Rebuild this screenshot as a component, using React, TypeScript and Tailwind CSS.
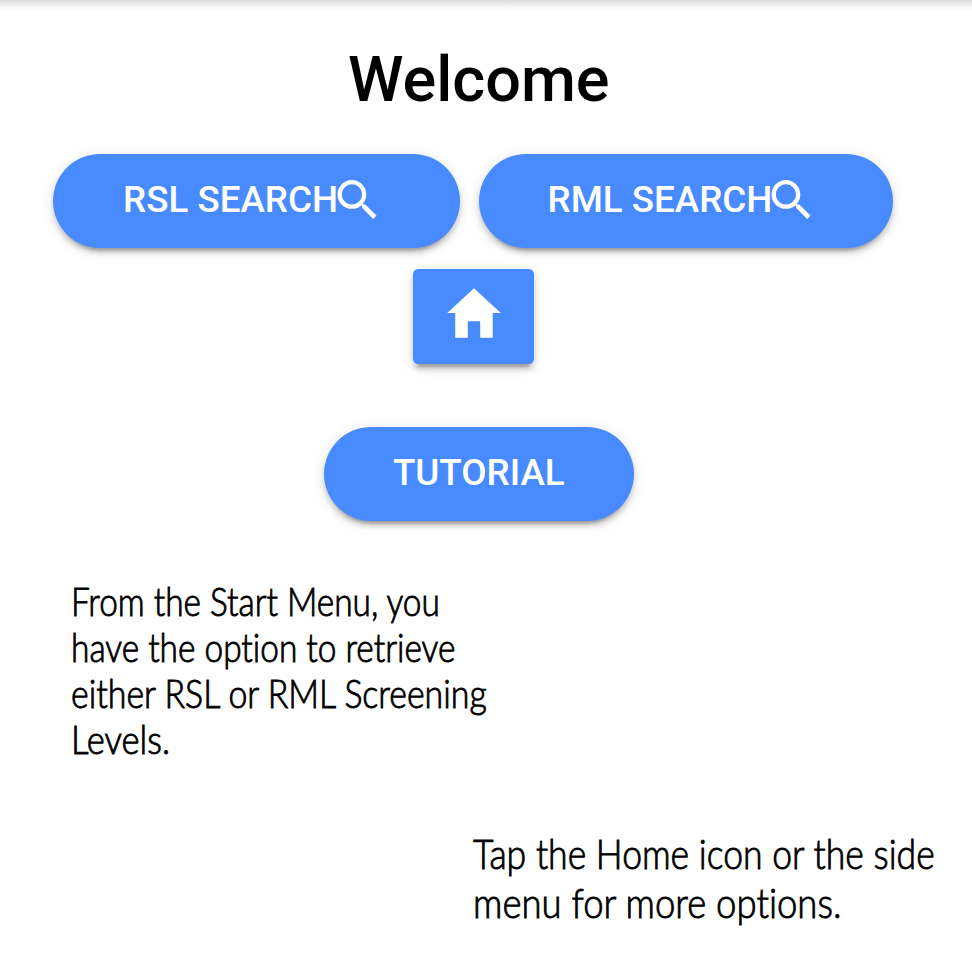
import type { ReactNode } from 'react';
import { IoMdHome, IoMdSearch } from 'react-icons/io';

const raised =
  'flex h-[94.5px] items-center justify-center bg-[#488aff] text-white shadow-[0_8px_2.6px_-5.2px_rgba(0,0,0,0.2),0_5.2px_5.2px_0_rgba(0,0,0,0.14),0_2.6px_13px_0_rgba(0,0,0,0.12)]';

function PillButton({ children, width }: { children: ReactNode; width: string }) {
  return (
    <button className={`${raised} ${width} shrink-0 rounded-full text-[36.75px] font-medium leading-none whitespace-nowrap`}>
      {children}
    </button>
  );
}

function Line({ children, fit }: { children: string; fit: string }) {
  return <span className={`block w-fit origin-left whitespace-nowrap ${fit}`}>{children}</span>;
}

const note =
  "font-['Lato',sans-serif] font-light [font-variant-ligatures:none] [-webkit-text-stroke:0.9px_black]";

export default function App() {
  return (
    <main className="flex h-[972px] w-[972px] flex-col overflow-hidden bg-white font-['Roboto',sans-serif] text-black">
      <div className="h-[10px] shrink-0 bg-linear-to-b from-[#dadada] via-[#f0f0f0] to-white" />
      <h1 className="mt-[33px] ml-[348px] h-[74px] text-[63px] leading-[74px] font-medium">Welcome</h1>
      <div className="mt-[36.5px] ml-[53px] flex gap-[19px]">
        <PillButton width="w-[407px]">
          <span className="-mt-[1px]">RSL SEARCH</span>
          <IoMdSearch className="mr-[7px] -ml-[7px] size-[52px] -translate-y-[1.6px]" />
        </PillButton>
        <PillButton width="w-[414px]">
          <span className="-mt-[1px]">RML SEARCH</span>
          <IoMdSearch className="mr-[7px] -ml-[7px] size-[52px] -translate-y-[1.6px]" />
        </PillButton>
      </div>
      <button aria-label="Home" className={`${raised} mt-[21px] ml-[413.3px] w-[120.7px] shrink-0 rounded-[5.25px]`}>
        <IoMdHome className="size-[66px] -translate-y-[3px]" />
      </button>
      <div className="mt-[63px] ml-[324px] flex">
        <PillButton width="w-[309.5px]">
          <span className="-mt-[1px]">TUTORIAL</span>
        </PillButton>
      </div>
      <p className={`mt-[57px] ml-[71px] text-[39px] leading-[46px] ${note}`}>
        <Line fit="scale-x-[0.856]">From the Start Menu, you</Line>
        <Line fit="scale-x-[0.857]">have the option to retrieve</Line>
        <Line fit="scale-x-[0.868]">either RSL or RML Screening</Line>
        <Line fit="scale-x-[0.888]">Levels.</Line>
      </p>
      <p className={`mt-[67px] ml-[473px] text-[42px] leading-[49px] ${note}`}>
        <Line fit="scale-x-[0.847]">Tap the Home icon or the side</Line>
        <Line fit="scale-x-[0.869]">menu for more options.</Line>
      </p>
    </main>
  );
}
